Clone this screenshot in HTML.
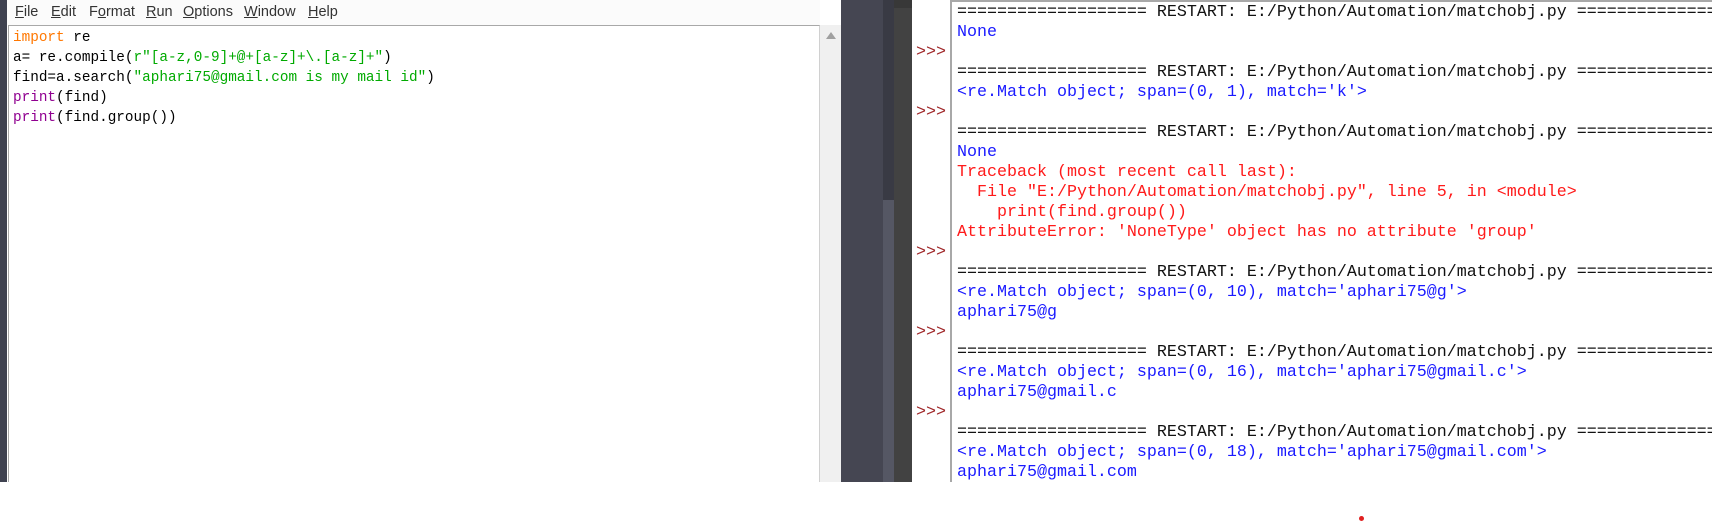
<!DOCTYPE html>
<html><head><meta charset="utf-8"><style>
*{margin:0;padding:0;box-sizing:border-box}
body{width:1712px;height:525px;background:#fff;position:relative;overflow:hidden;font-family:"Liberation Sans",sans-serif}
.abs{position:absolute}
#strip{left:0;top:0;width:7px;height:482px;background:#3f4250}
#menu{left:7px;top:0;width:813px;height:25px;background:#fbfbfb}
#menu span{position:absolute;top:4px;font-size:14.5px;color:#333}
#menu u{text-decoration:underline}
#ed{left:8px;top:25px;width:812px;height:457px;border-top:1px solid #a8a8a8;border-left:1px solid #a8a8a8;border-right:1px solid #d0d0d0;background:#fff}
pre{font-family:"Liberation Mono",monospace;white-space:pre;margin:0}
#code{left:13px;top:28px;font-size:14.35px;line-height:20px;color:#000}
.k{color:#ff7700}.s{color:#00aa00}.b{color:#900090}
#sb{left:820px;top:25px;width:21px;height:457px;background:#f0f0f0}
#sb i{position:absolute;left:6px;top:7px;width:0;height:0;border-left:5px solid transparent;border-right:5px solid transparent;border-bottom:7px solid #a0a0a0}
#d1{left:841px;top:0;width:42px;height:482px;background:#454652}
#d2{left:883px;top:0;width:11px;height:482px;background:linear-gradient(#393a44 0,#393a44 200px,#555764 200px)}
#d3{left:894px;top:0;width:18px;height:482px;background:#424242;border-top:8px solid #383838}
#pr{left:912px;top:0;width:38px;height:482px;background:#fff}
#pr pre{position:absolute;left:4px;font-size:16.67px;line-height:20px;color:#a0282a}
#sh{left:950px;top:0;width:762px;height:482px;border-left:2px solid #a8a8a8;border-top:2px solid #a8a8a8;overflow:hidden;background:#fff}
#out{left:5px;top:0px;font-size:16.67px;line-height:20px;color:#111}
.bl{color:#1a1aff}.r{color:#ff1a1a}
</style></head><body>
<div id="strip" class="abs"></div>
<div id="menu" class="abs">
<span style="left:8px"><u>F</u>ile</span>
<span style="left:44px"><u>E</u>dit</span>
<span style="left:82px">F<u>o</u>rmat</span>
<span style="left:139px"><u>R</u>un</span>
<span style="left:176px"><u>O</u>ptions</span>
<span style="left:237px"><u>W</u>indow</span>
<span style="left:301px"><u>H</u>elp</span>
</div>
<div id="ed" class="abs"></div>
<pre id="code" class="abs"><span class="k">import</span> re
a= re.compile(<span class="s">r"[a-z,0-9]+@+[a-z]+\.[a-z]+"</span>)
find=a.search(<span class="s">"aphari75@gmail.com is my mail id"</span>)
<span class="b">print</span>(find)
<span class="b">print</span>(find.group())</pre>
<div id="sb" class="abs"><i></i></div>
<div id="d1" class="abs"></div>
<div id="d2" class="abs"></div>
<div id="d3" class="abs"></div>
<div id="pr" class="abs">
<pre style="top:43px">&gt;&gt;&gt;</pre>
<pre style="top:103px">&gt;&gt;&gt;</pre>
<pre style="top:243px">&gt;&gt;&gt;</pre>
<pre style="top:323px">&gt;&gt;&gt;</pre>
<pre style="top:403px">&gt;&gt;&gt;</pre>
</div>
<div id="sh" class="abs">
<pre id="out" class="abs" style="top:1px">=================== RESTART: E:/Python/Automation/matchobj.py ===================
<span class="bl">None</span>

=================== RESTART: E:/Python/Automation/matchobj.py ===================
<span class="bl">&lt;re.Match object; span=(0, 1), match='k'&gt;</span>

=================== RESTART: E:/Python/Automation/matchobj.py ===================
<span class="bl">None</span>
<span class="r">Traceback (most recent call last):
  File "E:/Python/Automation/matchobj.py", line 5, in &lt;module&gt;
    print(find.group())
AttributeError: 'NoneType' object has no attribute 'group'</span>

=================== RESTART: E:/Python/Automation/matchobj.py ===================
<span class="bl">&lt;re.Match object; span=(0, 10), match='aphari75@g'&gt;
aphari75@g</span>

=================== RESTART: E:/Python/Automation/matchobj.py ===================
<span class="bl">&lt;re.Match object; span=(0, 16), match='aphari75@gmail.c'&gt;
aphari75@gmail.c</span>

=================== RESTART: E:/Python/Automation/matchobj.py ===================
<span class="bl">&lt;re.Match object; span=(0, 18), match='aphari75@gmail.com'&gt;
aphari75@gmail.com</span></pre>
</div>
<div class="abs" style="left:1359px;top:516px;width:5px;height:5px;border-radius:50%;background:#e02020"></div>
</body></html>
